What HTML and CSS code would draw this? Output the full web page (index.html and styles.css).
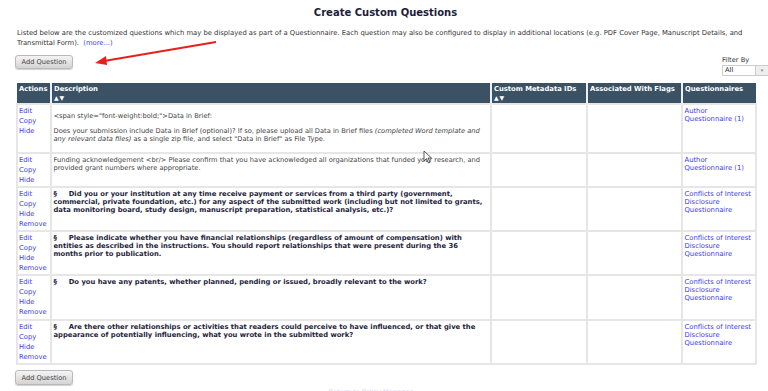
FILE: index.html
```html
<!DOCTYPE html>
<html>
<head>
<meta charset="utf-8">
<link rel="stylesheet" href="styles.css">
</head>
<body>
<div class="page">
  <h1 class="title">Create Custom Questions</h1>
  <p class="intro">Listed below are the customized questions which may be displayed as part of a Questionnaire. Each question may also be configured to display in additional locations (e.g. PDF Cover Page, Manuscript Details, and Transmittal Form). &nbsp;<a class="link" href="#">(more...)</a></p>
  <div class="toolbar">
    <button class="btn">Add Question</button>
    <div class="filter">
      <span class="filter-label">Filter By</span>
      <span class="select"><span class="select-val">All</span><span class="select-arrow">&#9662;</span></span>
    </div>
  </div>
  <table class="grid">
    <colgroup>
      <col class="c-act"><col class="c-desc"><col class="c-meta"><col class="c-flags"><col class="c-q">
    </colgroup>
    <thead>
      <tr>
        <th>Actions</th>
        <th>Description<div class="sort">&#9650;&#9660;</div></th>
        <th>Custom Metadata IDs<div class="sort">&#9650;&#9660;</div></th>
        <th>Associated With Flags</th>
        <th>Questionnaires</th>
      </tr>
    </thead>
    <tbody>
      <tr class="r1">
        <td class="act"><a href="#">Edit</a><a href="#">Copy</a><a href="#">Hide</a></td>
        <td class="desc first"><p>&lt;span style="font-weight:bold;"&gt;Data in Brief:</p><p class="gap">Does your submission include Data in Brief (optional)? If so, please upload all Data in Brief files <i>(completed Word template and any relevant data files)</i> as a single zip file, and select "Data in Brief" as File Type.</p></td>
        <td></td><td></td>
        <td class="q"><a href="#">Author Questionnaire (1)</a></td>
      </tr>
      <tr class="r2">
        <td class="act"><a href="#">Edit</a><a href="#">Copy</a><a href="#">Hide</a></td>
        <td class="desc">Funding acknowledgement &lt;br/&gt; Please confirm that you have acknowledged all organizations that funded your research, and provided grant numbers where appropriate.</td>
        <td></td><td></td>
        <td class="q"><a href="#">Author Questionnaire (1)</a></td>
      </tr>
      <tr class="r3">
        <td class="act"><a href="#">Edit</a><a href="#">Copy</a><a href="#">Hide</a><a href="#">Remove</a></td>
        <td class="desc bold">§&nbsp;&nbsp;&nbsp;&nbsp; Did you or your institution at any time receive payment or services from a third party (government, commercial, private foundation, etc.) for any aspect of the submitted work (including but not limited to grants, data monitoring board, study design, manuscript preparation, statistical analysis, etc.)?</td>
        <td></td><td></td>
        <td class="q"><a href="#">Conflicts of Interest Disclosure Questionnaire</a></td>
      </tr>
      <tr class="r4">
        <td class="act"><a href="#">Edit</a><a href="#">Copy</a><a href="#">Hide</a><a href="#">Remove</a></td>
        <td class="desc bold">§&nbsp;&nbsp;&nbsp;&nbsp; Please indicate whether you have financial relationships (regardless of amount of compensation) with entities as described in the instructions. You should report relationships that were present during the 36 months prior to publication.</td>
        <td></td><td></td>
        <td class="q"><a href="#">Conflicts of Interest Disclosure Questionnaire</a></td>
      </tr>
      <tr class="r5">
        <td class="act"><a href="#">Edit</a><a href="#">Copy</a><a href="#">Hide</a><a href="#">Remove</a></td>
        <td class="desc bold">§&nbsp;&nbsp;&nbsp;&nbsp; Do you have any patents, whether planned, pending or issued, broadly relevant to the work?</td>
        <td></td><td></td>
        <td class="q"><a href="#">Conflicts of Interest Disclosure Questionnaire</a></td>
      </tr>
      <tr class="r6">
        <td class="act"><a href="#">Edit</a><a href="#">Copy</a><a href="#">Hide</a><a href="#">Remove</a></td>
        <td class="desc bold">§&nbsp;&nbsp;&nbsp;&nbsp; Are there other relationships or activities that readers could perceive to have influenced, or that give the appearance of potentially influencing, what you wrote in the submitted work?</td>
        <td></td><td></td>
        <td class="q"><a href="#">Conflicts of Interest Disclosure Questionnaire</a></td>
      </tr>
    </tbody>
  </table>
  <div class="bottom">
    <button class="btn">Add Question</button>
  </div>
  <div class="footer"><a href="#">Return to Policy Manager</a></div>
</div>
<svg class="arrow" width="130" height="30" viewBox="0 0 130 30">
  <line x1="124" y1="2" x2="12" y2="21" stroke="#e8201c" stroke-width="2"/>
  <polygon points="3,23 14,16 15,25" fill="#e8201c"/>
</svg>
<svg class="cursor" width="10" height="14" viewBox="0 0 10 14">
  <path d="M1 1 L1 11 L3.5 8.6 L5.5 13 L7 12.3 L5 8 L8.5 8 Z" fill="#fff" stroke="#333" stroke-width="0.8"/>
</svg>
</body>
</html>
```
FILE: styles.css
```css
html, body { margin: 0; padding: 0; background: #fff; }
body {
  font-family: "DejaVu Sans", Verdana, sans-serif;
  font-size: 6.7px;
  color: #444;
  position: relative;
  width: 768px;
  height: 391px;
  overflow: hidden;
}
.page { padding: 0 13px 0 16px; }
.title {
  margin: 0;
  padding-top: 6px;
  text-align: center;
  font-size: 10px;
  font-weight: bold;
  color: #1d1d3b;
  line-height: 13px;
}
.intro {
  margin: 9px 0 0 1px;
  font-size: 6.8px;
  line-height: 10px;
  color: #333;
}
a { color: #3b3bf0; text-decoration: none; }
.toolbar {
  display: flex;
  justify-content: space-between;
  align-items: flex-end;
  margin-top: 4px;
  height: 31px;
}
.toolbar .btn { align-self: flex-start; margin-top: 3px; }
.btn {
  font-family: "DejaVu Sans", Verdana, sans-serif;
  font-size: 6.7px;
  color: #444;
  height: 14px;
  width: 58px;
  padding: 0;
  border: 1px solid #b9b9b9;
  border-radius: 3px;
  background: linear-gradient(#f4f4f4, #d4d4d4);
  box-shadow: 0 1px 1px rgba(0,0,0,0.18);
  margin-left: -1px;
}
.filter {
  display: flex;
  flex-direction: column;
  width: 47px;
  margin-right: -14px;
  margin-bottom: 7px;
}
.filter-label { line-height: 9px; color: #333; }
.select {
  display: flex;
  height: 11px;
  border: 1px solid #ccc;
  box-sizing: border-box;
  background: #fff;
}
.select-val { flex: 1; padding-left: 2px; line-height: 9px; color: #222; }
.select-arrow {
  width: 12px;
  border-left: 1px solid #ccc;
  background: #eee;
  color: #888;
  font-size: 5px;
  text-align: center;
  line-height: 9px;
}
.grid {
  width: 739px;
  border-collapse: collapse;
  table-layout: fixed;
}
.c-act { width: 34px; }
.c-desc { width: 440px; }
.c-meta { width: 96px; }
.c-flags { width: 95px; }
.c-q { width: 74px; }
.grid thead tr { height: 21px; }
.grid th {
  background: #3b5265;
  color: #fff;
  font-weight: bold;
  font-size: 6.8px;
  text-align: left;
  vertical-align: top;
  padding: 2px 2px 0 2px;
  border-left: 2px solid #eee;
  line-height: 8.5px;
  white-space: nowrap;
}
.grid th:first-child { border-left: none; }
.sort { font-size: 6px; line-height: 7px; letter-spacing: 1px; }
.grid td {
  border: 2px solid #e6e6e6;
  vertical-align: top;
  padding: 1.5px 0 0 1.5px;
}
.grid td.act { padding: 1px 0 0 1px; font-size: 6.8px; }
.act a { display: block; line-height: 10px; color: #3b3bf0; }
.grid td.desc { line-height: 8.4px; padding-right: 2px; }
.desc p { margin: 0; }
.grid td.first { padding-top: 7px; }
.desc p.gap { margin-top: 6.6px; }
.r1 { height: 49px; }
.r2 { height: 34px; }
.r3 { height: 44px; }
.r4 { height: 44px; }
.r5 { height: 45px; }
.r6 { height: 44px; }
.bold { font-weight: bold; font-size: 6.8px; color: #1e1e3c; }
.q { line-height: 8.4px; font-size: 6.8px; }
.bottom { margin-top: 5px; }
.bottom .btn { height: 15px; }
.footer {
  text-align: center;
  margin-top: 3px;
  line-height: 8px;
  padding-right: 30px;
}
.footer a { color: #d8d8f6; }
.arrow { position: absolute; left: 92px; top: 40px; }
.cursor { position: absolute; left: 423px; top: 150px; }
```
